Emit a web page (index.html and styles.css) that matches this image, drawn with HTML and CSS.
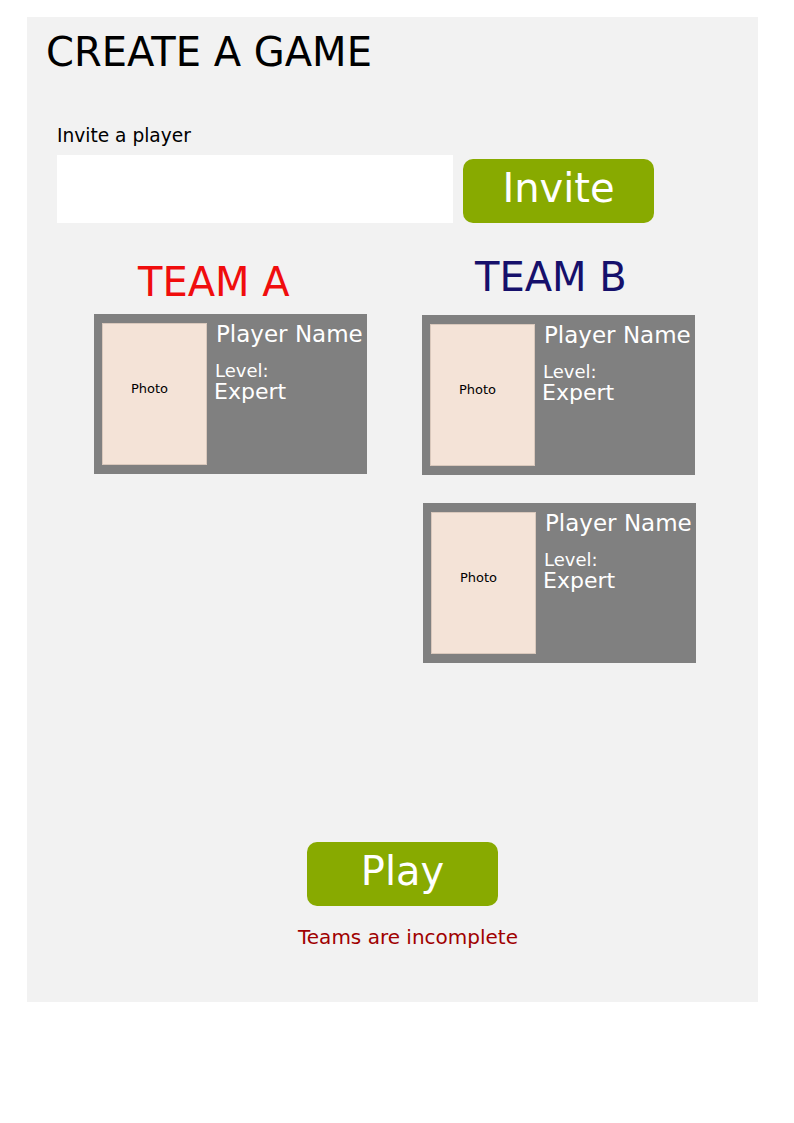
FILE: index.html
```html
<!DOCTYPE html>
<html lang="en">
<head>
<meta charset="utf-8">
<title>Create a game</title>
<link rel="stylesheet" href="styles.css">
</head>
<body>
<main class="panel">
  <h1 class="title">CREATE A GAME</h1>

  <section class="invite">
    <label class="invite-label" for="player">Invite a player</label>
    <div class="invite-row">
      <input class="invite-input" id="player" type="text">
      <button class="btn btn-invite" type="button">Invite</button>
    </div>
  </section>

  <section class="teams">
    <div class="team team-a">
      <h2 class="team-title team-title-a">TEAM A</h2>
      <div class="card">
        <div class="photo">Photo</div>
        <div class="info">
          <div class="name">Player Name</div>
          <div class="level-label">Level:</div>
          <div class="level">Expert</div>
        </div>
      </div>
    </div>
    <div class="team team-b">
      <h2 class="team-title team-title-b">TEAM B</h2>
      <div class="card card-b1">
        <div class="photo">Photo</div>
        <div class="info">
          <div class="name">Player Name</div>
          <div class="level-label">Level:</div>
          <div class="level">Expert</div>
        </div>
      </div>
      <div class="card card-b2">
        <div class="photo">Photo</div>
        <div class="info">
          <div class="name">Player Name</div>
          <div class="level-label">Level:</div>
          <div class="level">Expert</div>
        </div>
      </div>
    </div>
  </section>

  <section class="play">
    <button class="btn btn-play" type="button">Play</button>
    <p class="status">Teams are incomplete</p>
  </section>
</main>
</body>
</html>
```

FILE: styles.css
```css
* {
  box-sizing: border-box;
}

body {
  margin: 0;
  background: #ffffff;
  font-family: "DejaVu Sans", "Liberation Sans", sans-serif;
}

.panel {
  margin: 17px 0 0 27px;
  width: 731px;
  height: 985px;
  background: #f2f2f2;
  padding-top: 15px;
  display: flex;
  flex-direction: column;
  align-items: flex-start;
}

.title {
  margin: 0 0 0 19px;
  font-size: 40px;
  line-height: 40px;
  font-weight: normal;
  color: #000000;
}

.invite {
  margin: 54px 0 0 30px;
  display: flex;
  flex-direction: column;
}

.invite-label {
  font-size: 18.6px;
  line-height: 19px;
  color: #000000;
}

.invite-row {
  margin-top: 10px;
  display: flex;
  align-items: flex-end;
  gap: 10px;
}

.invite-input {
  width: 396px;
  height: 68px;
  border: none;
  background: #ffffff;
  margin: 0;
  padding: 0 10px;
  font-family: inherit;
  font-size: 20px;
}

.btn {
  width: 191px;
  height: 64px;
  border: none;
  border-radius: 10px;
  background: #88aa00;
  color: #ffffff;
  font-family: inherit;
  font-size: 40px;
  line-height: 58px;
  padding: 0 0 6px 0;
  margin: 0;
  text-align: center;
}

.teams {
  margin: 34px 0 0 67px;
  display: flex;
  gap: 55px;
}

.team {
  display: flex;
  flex-direction: column;
  align-items: flex-start;
  width: 273px;
}

.team-title {
  margin: 0;
  font-size: 40px;
  line-height: 40px;
  font-weight: normal;
  white-space: nowrap;
}

.team-title-a {
  margin: 5px 0 12px 44px;
  color: #f00d0d;
}

.team-title-b {
  margin: 0 0 18px 53px;
  color: #16106b;
}

.card {
  width: 273px;
  height: 160px;
  background: #808080;
  padding: 9px 8px;
  display: flex;
  gap: 9px;
}

.card-b2 {
  margin: 28px 0 0 1px;
}

.photo {
  width: 105px;
  height: 142px;
  flex: none;
  background: #f4e3d7;
  border: 1px solid #d9c8bc;
  display: flex;
  align-items: center;
  justify-content: center;
  padding: 0 10px 12px 0;
  font-size: 13px;
  color: #000000;
}

.info {
  color: #ffffff;
  white-space: nowrap;
}

.name {
  font-size: 23px;
  line-height: 23px;
}

.level-label {
  margin: 16px 0 0 -1px;
  font-size: 18px;
  line-height: 18px;
}

.level {
  margin: 1px 0 0 -2px;
  font-size: 22px;
  line-height: 22px;
}

.play {
  margin-top: 179px;
  display: flex;
  flex-direction: column;
  align-items: flex-start;
}

.btn-play {
  margin-left: 280px;
}

.status {
  margin: 21px 0 0 271px;
  font-size: 20px;
  line-height: 20px;
  color: #a00000;
}
```
